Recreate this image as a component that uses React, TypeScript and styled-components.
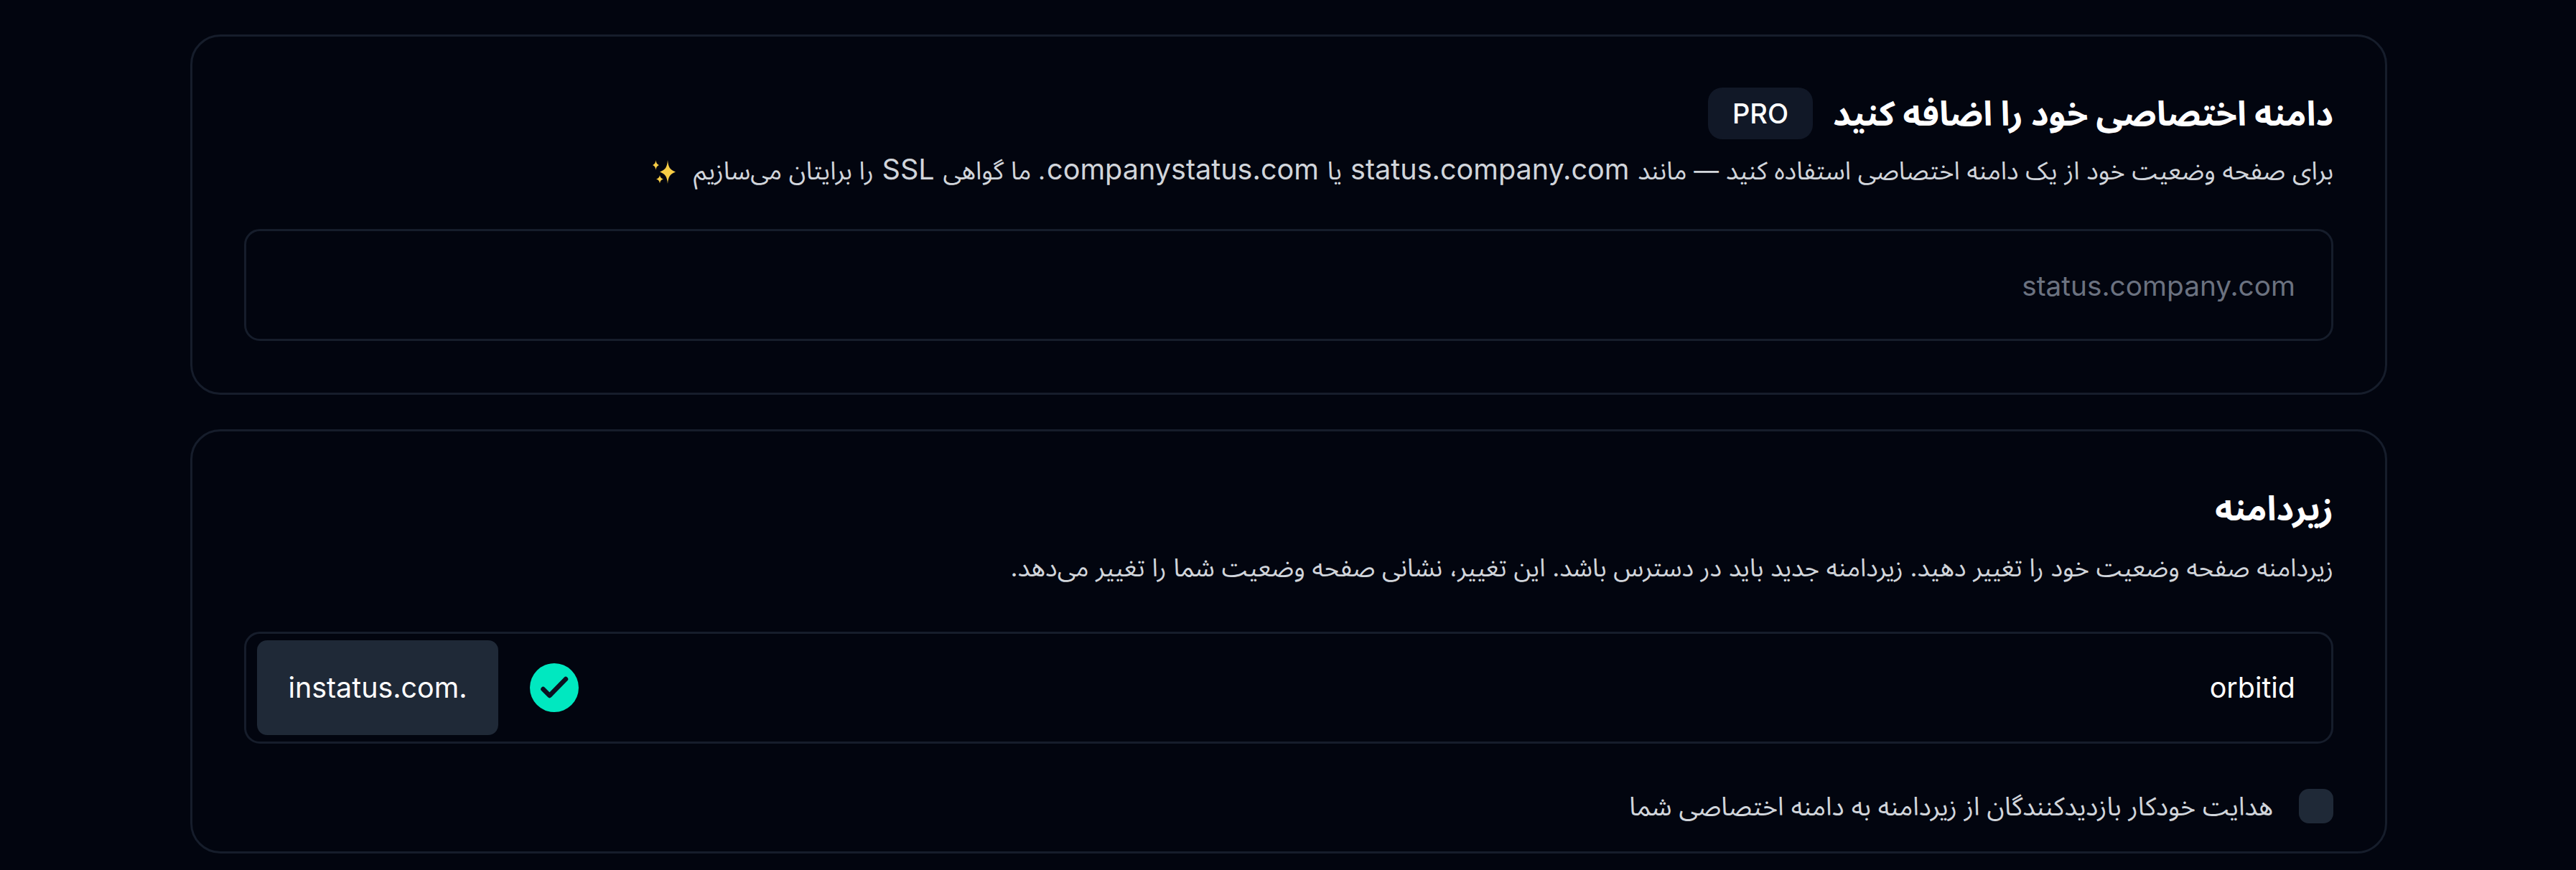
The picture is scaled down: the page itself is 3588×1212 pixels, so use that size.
import React from "react";
import styled, { createGlobalStyle } from "styled-components";

const Global = createGlobalStyle`
  html, body { margin: 0; padding: 0; background: #02050f; }
  body { font-family: Inter, "Noto Sans Arabic", "DejaVu Sans", sans-serif; }
`;

const Page = styled.main`
  direction: rtl;
  box-sizing: border-box;
  width: 3588px;
  height: 1212px;
  overflow: hidden;
  padding: 48px 263px 0 265px;
  display: flex;
  flex-direction: column;
  gap: 48px;
  background: #02050f;
`;

const Card = styled.section<{ $bottom: number }>`
  box-sizing: border-box;
  border: 3px solid #161d2b;
  border-radius: 42px;
  padding: 70px 72px ${(p) => p.$bottom}px;
  display: flex;
  flex-direction: column;
`;

const TitleRow = styled.div`
  display: flex;
  align-items: center;
  gap: 28px;
  height: 74px;
`;

const Title = styled.h2`
  margin: 0;
  font-size: 47.5px;
  line-height: 54px;
  font-weight: 700;
  color: #ffffff;
`;

const Badge = styled.span`
  display: flex;
  align-items: center;
  justify-content: center;
  width: 146px;
  height: 72px;
  border-radius: 20px;
  background: #111827;
  color: #ffffff;
  font-size: 38px;
  font-weight: 500;
`;

const Desc = styled.p<{ $top: number }>`
  margin: ${(p) => p.$top}px 0 0;
  font-size: 34.8px;
  line-height: 58px;
  color: #d1d5db;
`;

const Latin = styled.span`
  font-size: 39.6px;
  margin: 0 2px;
`;

const Sparkles = styled.svg`
  width: 34px;
  height: 33px;
  margin-right: 23px;
  vertical-align: -6px;
`;

const Field = styled.div<{ $top: number }>`
  box-sizing: border-box;
  margin-top: ${(p) => p.$top}px;
  height: 156px;
  border: 3px solid #161d2b;
  border-radius: 22px;
  display: flex;
  align-items: center;
  padding: 0 50px 0 15px;
  font-size: 39.4px;
`;

const Value = styled.span<{ $muted?: boolean }>`
  flex: 1;
  color: ${(p) => (p.$muted ? "#6b7280" : "#ffffff")};
  font-size: ${(p) => (p.$muted ? "38.8px" : "39.4px")};
`;

const StatusIcon = styled.svg`
  width: 68px;
  height: 68px;
  margin-left: 44px;
  flex: none;
`;

const Addon = styled.span`
  direction: ltr;
  box-sizing: border-box;
  width: 336px;
  height: 132px;
  flex: none;
  border-radius: 14px;
  background: #1f2937;
  color: #ffffff;
  display: flex;
  align-items: center;
  justify-content: center;
`;

const CheckRow = styled.label`
  display: flex;
  align-items: center;
  gap: 36px;
  height: 48px;
  margin-top: 63px;
`;

const Check = styled.span`
  width: 48px;
  height: 48px;
  flex: none;
  border-radius: 14px;
  background: #1f2937;
`;

const CheckText = styled.span`
  font-size: 35.8px;
  line-height: 48px;
  color: #d1d5db;
`;

export default function App() {
  return (
    <>
      <Global />
      <Page>
        <Card $bottom={72}>
          <TitleRow>
            <Title>دامنه اختصاصی خود را اضافه کنید</Title>
            <Badge>PRO</Badge>
          </TitleRow>
          <Desc $top={12}>
            برای صفحه وضعیت خود از یک دامنه اختصاصی استفاده کنید — مانند <Latin>status.company.com</Latin> یا <Latin>companystatus.com</Latin>. ما گواهی <Latin>SSL</Latin> را برایتان می‌سازیم
            <Sparkles viewBox="0 0 34 33">
              <path d="M21 0 C22 10 24 13.5 32 16.5 C24 19.5 22 23 21 33 C20 23 18 19.5 10 16.5 C18 13.5 20 10 21 0Z" fill="#f7cd46" />
              <path d="M4.5 0 C5 4 6 5.5 9 7 C6 8.5 5 10 4.5 14 C4 10 3 8.5 0 7 C3 5.5 4 4 4.5 0Z" fill="#f7cd46" />
              <path d="M10 21 C10.5 24 12 25.5 15 26.5 C12 27.5 10.5 29 10 32.5 C9.5 29 8 27.5 5 26.5 C8 25.5 9.5 24 10 21Z" fill="#f7cd46" />
            </Sparkles>
          </Desc>
          <Field $top={53}>
            <Value $muted>status.company.com</Value>
          </Field>
        </Card>
        <Card $bottom={39}>
          <TitleRow>
            <Title>زیردامنه</Title>
          </TitleRow>
          <Desc $top={16}>
            زیردامنه صفحه وضعیت خود را تغییر دهید. زیردامنه جدید باید در دسترس باشد. این تغییر، نشانی صفحه وضعیت شما را تغییر می‌دهد.
          </Desc>
          <Field $top={61}>
            <Value>orbitid</Value>
            <StatusIcon viewBox="0 0 68 68">
              <circle cx="34" cy="34" r="34" fill="#00e8c0" />
              <path d="M18.5 36 L27.5 45 L50 22" fill="none" stroke="#0b1020" strokeWidth="6.5" strokeLinecap="round" strokeLinejoin="round" />
            </StatusIcon>
            <Addon>instatus.com.</Addon>
          </Field>
          <CheckRow>
            <Check />
            <CheckText>هدایت خودکار بازدیدکنندگان از زیردامنه به دامنه اختصاصی شما</CheckText>
          </CheckRow>
        </Card>
      </Page>
    </>
  );
}
